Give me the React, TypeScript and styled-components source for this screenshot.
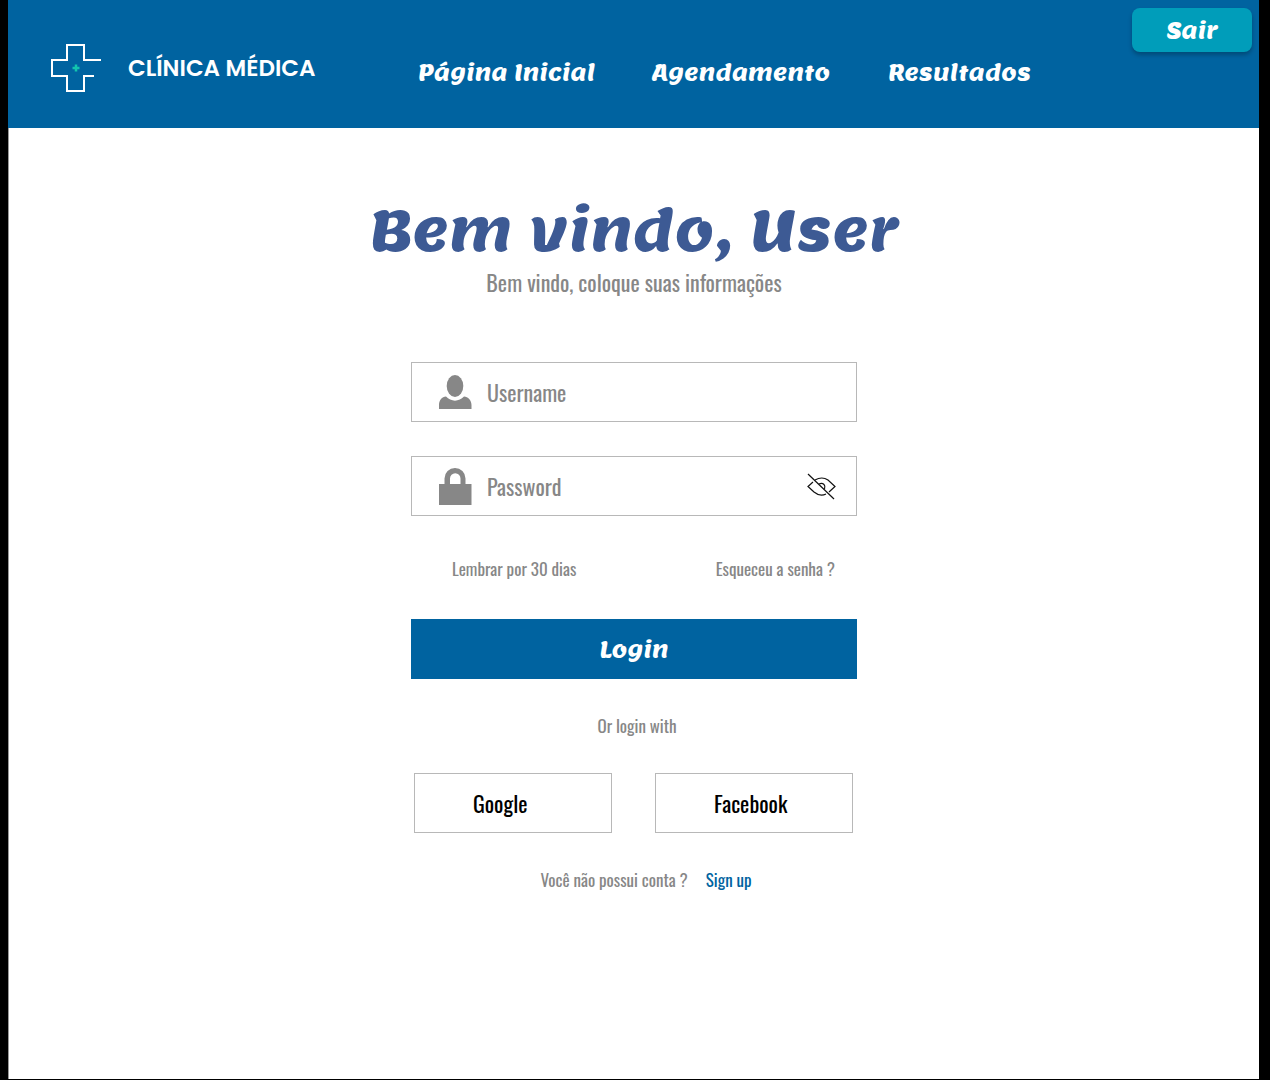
import React, { useState } from "react";
import styled, { createGlobalStyle } from "styled-components";

const color = {
  brand: "#0063a0",
  teal: "#009dba",
  title: "#3d5a94",
  muted: "#878787",
  line: "#b8b8b8",
};

const display = `"Lemon", "Open Sans", sans-serif`;
const narrow = `"Oswald", "Liberation Sans Narrow", "Roboto Condensed", "Roboto", sans-serif`;
const brandFont = `"Poppins", "Inter", sans-serif`;

const GlobalStyle = createGlobalStyle`
  *, *::before, *::after { box-sizing: border-box; }
  body { margin: 0; background: #000; font-family: ${narrow}; }
  button, input { font: inherit; }
  button { cursor: pointer; }
`;

const Frame = styled.div`
  min-height: 100vh;
  padding: 0 11px 1px 8px;
  background: #000;
  display: flex;
`;

const Page = styled.div`
  flex: 1;
  background: #fff;
  border-left: 1px solid #999;
`;

const Header = styled.header`
  min-height: 128px;
  margin-left: -1px;
  padding: 8px 7px 0 43px;
  display: flex;
  align-items: flex-start;
  background: ${color.brand};
`;

const Brand = styled.a`
  flex: 0 0 367px;
  margin-top: 35px;
  display: flex;
  align-items: center;
  gap: 26px;
  color: #fff;
  font: 600 23px/50px ${brandFont};
  text-decoration: none;
`;

const Nav = styled.nav`
  margin-top: 48px;
  display: grid;
  grid-template-columns: 234px 236px auto;
`;

const NavLink = styled.a`
  color: #fff;
  font: 400 22px/32px ${display};
  text-decoration: none;
`;

const ExitButton = styled.button`
  width: 120px;
  height: 44px;
  margin-left: auto;
  border: 0;
  border-radius: 8px;
  background: ${color.teal};
  box-shadow: 0 3px 4px rgba(0, 0, 0, 0.25);
  color: #fff;
  font: 400 22px/32px ${display};
`;

const Main = styled.main`
  padding: 65px 0 40px;
  display: flex;
  flex-direction: column;
  align-items: center;
`;

const Title = styled.h1`
  margin: 0;
  color: ${color.title};
  font: 400 56px/76px ${display};
`;

const Subtitle = styled.p`
  margin: 0;
  color: ${color.muted};
  font-size: 22px;
  line-height: 26px;
`;

const Form = styled.form`
  width: 100%;
  max-width: 446px;
  margin-top: 67px;
  display: flex;
  flex-direction: column;
`;

const Field = styled.label`
  height: 60px;
  margin-bottom: 34px;
  padding: 0 20px 0 26px;
  display: flex;
  align-items: center;
  gap: 15px;
  border: 1px solid ${color.line};
  color: ${color.muted};

  > svg { flex: none; }
`;

const Input = styled.input`
  flex: 1;
  min-width: 0;
  padding: 0;
  border: 0;
  outline: 0;
  background: none;
  color: #333;
  font-size: 22px;
  line-height: 30px;

  &::placeholder { color: ${color.muted}; opacity: 1; }
`;

const IconButton = styled.button`
  padding: 0;
  display: flex;
  border: 0;
  background: none;
  color: #111;
`;

const Options = styled.div`
  margin: 7px 22px 0 41px;
  display: flex;
  justify-content: space-between;
  color: ${color.muted};
  font-size: 17px;
  line-height: 24px;
`;

const TextButton = styled.button`
  padding: 0;
  border: 0;
  background: none;
  color: inherit;
`;

const TextLink = styled.a<{ $strong?: boolean }>`
  color: ${(p) => (p.$strong ? color.brand : "inherit")};
  text-decoration: none;
`;

const LoginButton = styled.button`
  height: 60px;
  margin-top: 38px;
  border: 0;
  background: ${color.brand};
  color: #fff;
  font: 400 22px/32px ${display};
`;

const Small = styled.p`
  margin: 35px 0 0;
  color: ${color.muted};
  font-size: 17px;
  line-height: 24px;
  text-align: center;
`;

const Divider = styled(Small)`
  padding-left: 6px;
`;

const Social = styled.div`
  margin: 35px 4px 0 3px;
  display: grid;
  grid-template-columns: 1fr 1fr;
  gap: 43px;
`;

const SocialButton = styled.button`
  height: 60px;
  padding: 0 0 0 58px;
  border: 1px solid ${color.line};
  background: #fff;
  color: #000;
  font-size: 22px;
  line-height: 30px;
  text-align: left;
`;

const SignUp = styled(Small)`
  padding-left: 24px;
  display: flex;
  justify-content: center;
  gap: 18px;
`;

const LogoMark = () => (
  <svg width="51" height="50" viewBox="0 0 51 50" fill="none" aria-hidden="true">
    <path
      d="M50 17H33V2H16V17H1V33H16V48H33V33H43"
      stroke="#fff"
      strokeWidth="2"
    />
    <path d="M25 21.500v7M21.500 25h7" stroke="#12c4ae" strokeWidth="2.500" />
  </svg>
);

const UserIcon = () => (
  <svg width="34" height="36" viewBox="0 0 34 36" fill="currentColor" aria-hidden="true">
    <ellipse cx="17" cy="12" rx="8.300" ry="11" />
    <path d="M1 35V31C1 26 4 23 8 22.500C13 28 21 28 26 22.500C30 23 33.500 26 33.500 31V35Z" />
  </svg>
);

const LockIcon = () => (
  <svg width="34" height="38" viewBox="0 0 34 38" fill="currentColor" aria-hidden="true">
    <path d="M1 17H6.500V11.500A10.500 10.500 0 0 1 27.500 11.500V17H33.500V38H1ZM12 17H22.500V11.500A5.250 5.250 0 0 0 12 11.500Z" />
  </svg>
);

const EyeOffIcon = () => (
  <svg width="30" height="28" viewBox="0 0 30 28" fill="none" stroke="currentColor" strokeWidth="1.200" aria-hidden="true">
    <path d="M2 2L28 27" />
    <path d="M7 10L2 14.500L8 20Q14 25 20 22" />
    <path d="M9 8Q16 4 22 8L29 14.500L23 20" />
    <path d="M13 12Q16 10.500 18 12.500Q19.500 14 18.500 17" />
  </svg>
);

export default function App() {
  const [visible, setVisible] = useState(false);
  const [remember, setRemember] = useState(false);

  return (
    <>
      <GlobalStyle />
      <Frame>
        <Page>
          <Header>
            <Brand href="#">
              <LogoMark />
              CLÍNICA MÉDICA
            </Brand>
            <Nav>
              <NavLink href="#">Página Inicial</NavLink>
              <NavLink href="#">Agendamento</NavLink>
              <NavLink href="#">Resultados</NavLink>
            </Nav>
            <ExitButton type="button">Sair</ExitButton>
          </Header>
          <Main>
            <Title>Bem vindo, User</Title>
            <Subtitle>Bem vindo, coloque suas informações</Subtitle>
            <Form onSubmit={(e) => e.preventDefault()}>
              <Field htmlFor="username">
                <UserIcon />
                <Input id="username" aria-label="Username" placeholder="Username" />
              </Field>
              <Field htmlFor="password">
                <LockIcon />
                <Input
                  id="password"
                  aria-label="Password"
                  type={visible ? "text" : "password"}
                  placeholder="Password"
                />
                <IconButton
                  type="button"
                  aria-label="Mostrar senha"
                  onClick={() => setVisible(!visible)}
                >
                  <EyeOffIcon />
                </IconButton>
              </Field>
              <Options>
                <TextButton
                  type="button"
                  aria-pressed={remember}
                  onClick={() => setRemember(!remember)}
                >
                  Lembrar por 30 dias
                </TextButton>
                <TextLink href="#">Esqueceu a senha ?</TextLink>
              </Options>
              <LoginButton type="submit">Login</LoginButton>
              <Divider>Or login with</Divider>
              <Social>
                <SocialButton type="button">Google</SocialButton>
                <SocialButton type="button">Facebook</SocialButton>
              </Social>
              <SignUp>
                Você não possui conta ?
                <TextLink $strong href="#">Sign up</TextLink>
              </SignUp>
            </Form>
          </Main>
        </Page>
      </Frame>
    </>
  );
}
